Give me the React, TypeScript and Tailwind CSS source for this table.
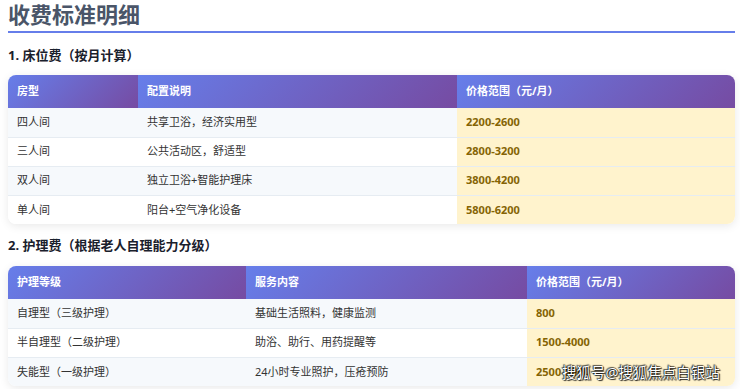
import React from "react";

const FONT = '"Noto Sans", "Noto Sans CJK SC", sans-serif';

type Row = [string, string, string];

function FeeTable({ head, rows, widths }: { head: Row; rows: Row[]; widths: [number, number, number] }) {
  return (
    <div className="w-[727px] rounded-lg overflow-hidden shadow-[0_2px_10px_rgba(0,0,0,0.09)] bg-white">
      <table className="w-full border-collapse table-fixed">
        <colgroup>
          <col style={{ width: widths[0] }} />
          <col style={{ width: widths[1] }} />
          <col style={{ width: widths[2] }} />
        </colgroup>
        <thead>
          <tr className="h-[33px]">
            {head.map((h, i) => (
              <th
                key={i}
                className="text-left pl-[9px] text-[11px] font-bold text-white bg-[linear-gradient(135deg,#667eea_0%,#764ba2_100%)]"
              >
                {h}
              </th>
            ))}
          </tr>
        </thead>
        <tbody>
          {rows.map((r, ri) => (
            <tr key={ri} className={`h-[29px] ${ri > 0 ? "border-t border-[#e6ecf2]" : ""} ${ri % 2 === 0 ? "bg-[#f6f9fc]" : "bg-white"}`}>
              <td className="pl-[9px] text-[11px] text-[#333]">{r[0]}</td>
              <td className="pl-[9px] text-[11px] text-[#333]">{r[1]}</td>
              <td className="pl-[9px] text-[11px] font-bold text-[#856404] bg-[#fff3cd]">{r[2]}</td>
            </tr>
          ))}
        </tbody>
      </table>
    </div>
  );
}

export default function App() {
  return (
    <div className="relative w-[740px] h-[389px] overflow-hidden bg-white pl-[8px]" style={{ fontFamily: FONT }}>
      <div className="w-[727px] border-b-2 border-[#667eea] pb-[3px]">
        <h1 className="text-[22px] leading-[28px] font-bold text-[#4a5568]">收费标准明细</h1>
      </div>
      <h2 className="mt-[13px] text-[13px] leading-[18px] font-bold text-[#1a202c]">1. 床位费（按月计算）</h2>
      <div className="mt-[11px]">
        <FeeTable
          widths={[130, 319, 278]}
          head={["房型", "配置说明", "价格范围（元/月）"]}
          rows={[
            ["四人间", "共享卫浴，经济实用型", "2200-2600"],
            ["三人间", "公共活动区，舒适型", "2800-3200"],
            ["双人间", "独立卫浴+智能护理床", "3800-4200"],
            ["单人间", "阳台+空气净化设备", "5800-6200"],
          ]}
        />
      </div>
      <h2 className="mt-[12px] text-[13px] leading-[18px] font-bold text-[#1a202c]">2. 护理费（根据老人自理能力分级）</h2>
      <div className="mt-[12px]">
        <FeeTable
          widths={[238, 281, 208]}
          head={["护理等级", "服务内容", "价格范围（元/月）"]}
          rows={[
            ["自理型（三级护理）", "基础生活照料，健康监测", "800"],
            ["半自理型（二级护理）", "助浴、助行、用药提醒等", "1500-4000"],
            ["失能型（一级护理）", "24小时专业照护，压疮预防", "2500-5000"],
          ]}
        />
      </div>
      <div
        className="absolute left-[562px] top-[362px] whitespace-nowrap text-[14.5px] leading-[20px] text-white"
        style={{ textShadow: "0 0 1px #000, 0 0 1px #000, 1px 1px 1px rgba(0,0,0,0.8), -1px -1px 1px rgba(0,0,0,0.6)" }}
      >
        搜狐号@搜狐焦点白银站
      </div>
    </div>
  );
}
